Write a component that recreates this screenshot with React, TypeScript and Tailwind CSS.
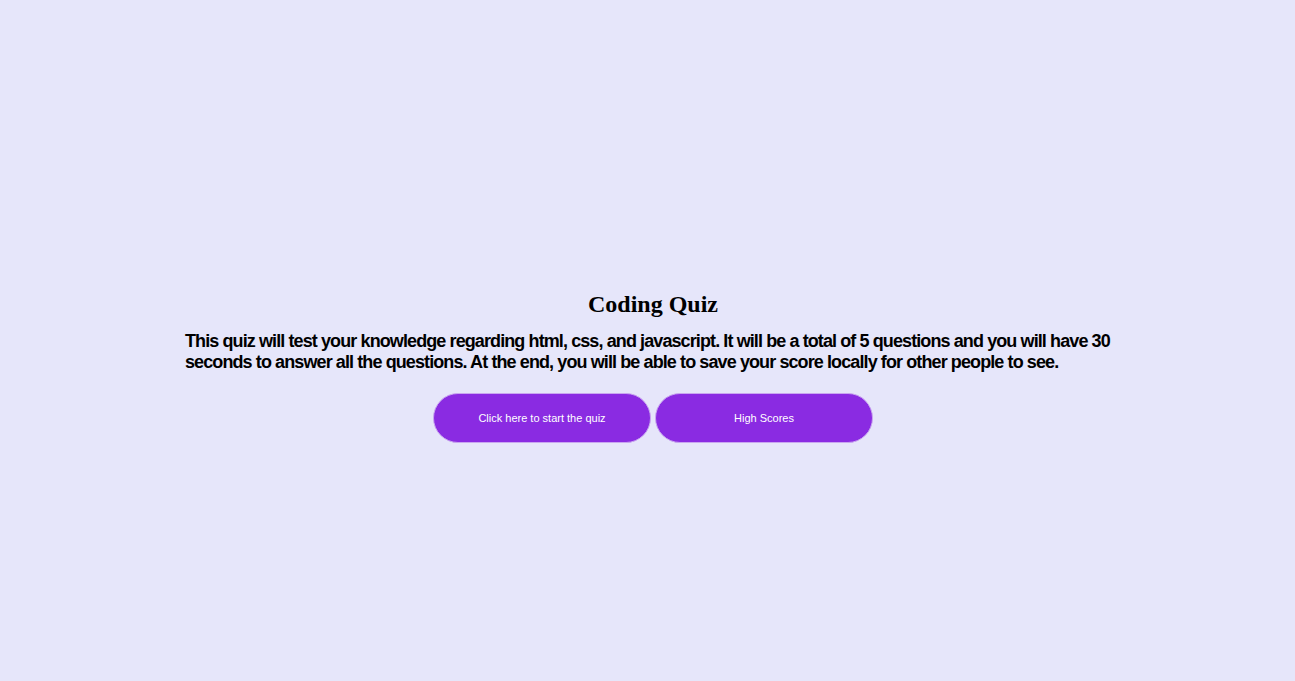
export default function App() {
  return (
    <div className="min-h-[681px] bg-[#e6e6fa] pt-[290px]">
      <main className="ml-[185px] w-[936px] text-center">
        <h1 className="font-['Liberation_Serif',serif] text-[24px] font-bold leading-[28px] text-black">
          Coding Quiz
        </h1>
        <p className="mt-[13px] text-left font-['Liberation_Sans',sans-serif] text-[18px] font-bold leading-[21px] tracking-[-0.9px] text-black">
          This quiz will test your knowledge regarding html, css, and javascript. It will be a total of 5 questions and you
          will have 30 seconds to answer all the questions. At the end, you will be able to save your score locally for
          other people to see.
        </p>
        <div className="mt-[20px] flex justify-center gap-[4px]">
          <button className="h-[50px] w-[218px] rounded-full border border-[#c9a6f0] bg-[#8a2be2] font-['Liberation_Sans',sans-serif] text-[11px] text-white">
            Click here to start the quiz
          </button>
          <button className="h-[50px] w-[218px] rounded-full border border-[#c9a6f0] bg-[#8a2be2] font-['Liberation_Sans',sans-serif] text-[11px] text-white">
            High Scores
          </button>
        </div>
      </main>
    </div>
  )
}
